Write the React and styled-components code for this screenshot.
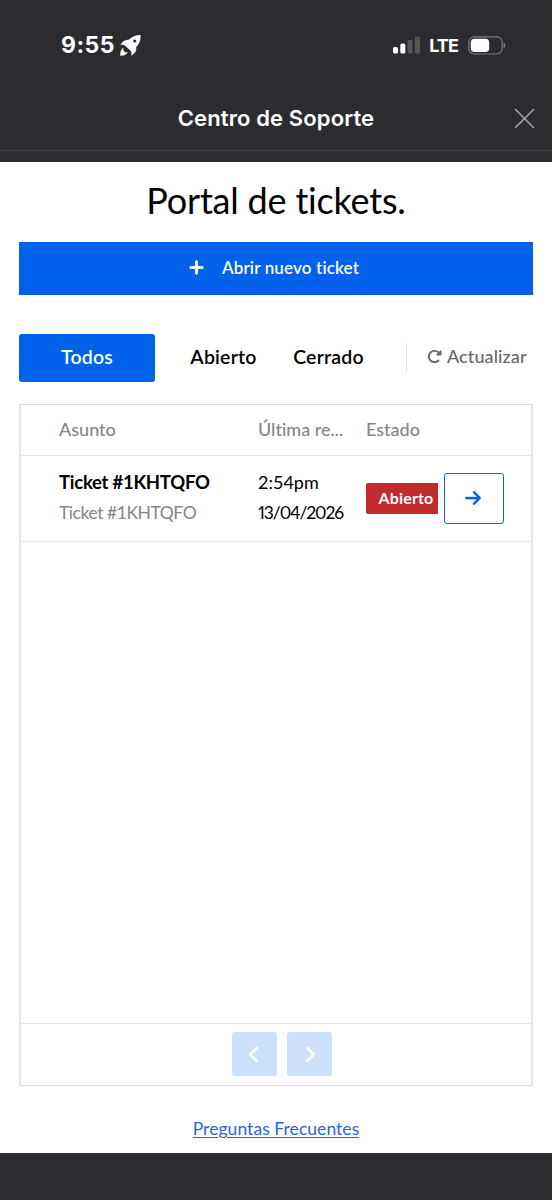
import styled, { createGlobalStyle } from 'styled-components'
import { FaPlus, FaArrowRight, FaChevronLeft, FaChevronRight, FaRotateRight } from 'react-icons/fa6'

const GlobalStyle = createGlobalStyle`
  * {
    box-sizing: border-box;
  }

  body {
    margin: 0;
    background: #2c2b30;
    font-family: Lato, 'Open Sans', sans-serif;
    font-variant-ligatures: none;
    color: #000;
  }

  button {
    font-family: inherit;
    font-variant-ligatures: none;
    cursor: pointer;
  }
`

const Screen = styled.div`
  width: 552px;
  height: 1200px;
  display: flex;
  flex-direction: column;
  overflow: hidden;
`

const StatusBar = styled.div`
  display: flex;
  justify-content: space-between;
  align-items: center;
  height: 90px;
  padding: 0 46px 0 61px;
  color: #fff;
  font-family: Inter, sans-serif;
`

const StatusGroup = styled.div`
  display: flex;
  align-items: center;
`

const Time = styled.span`
  font-size: 23px;
  font-weight: 700;
  letter-spacing: 0.5px;
  margin-right: 5px;
`

const Network = styled.span`
  font-size: 18px;
  font-weight: 700;
  letter-spacing: -0.9px;
  margin: 0 10px 0 8px;
`

const TitleBar = styled.header`
  display: flex;
  justify-content: center;
  align-items: center;
  position: relative;
  height: 61px;
  padding-bottom: 4px;
  border-bottom: 1px solid #424146;
  margin-bottom: 11px;
`

const BarTitle = styled.h1`
  margin: 0;
  color: #fff;
  font-family: Inter, sans-serif;
  font-size: 22px;
  font-weight: 600;
  letter-spacing: 0.12px;
`

const CloseButton = styled.button`
  position: absolute;
  right: 17px;
  top: 18px;
  display: flex;
  padding: 0;
  border: none;
  background: none;
`

const Page = styled.main`
  height: 991px;
  padding: 0 19px;
  background: #fff;
`

const Heading = styled.h2`
  margin: 0;
  height: 80px;
  line-height: 76px;
  text-align: center;
  font-size: 36px;
  font-weight: 400;
  letter-spacing: -0.2px;
`

const NewTicket = styled.button`
  display: flex;
  justify-content: center;
  align-items: center;
  gap: 17px;
  width: 100%;
  height: 53px;
  padding: 0 5px 2px 0;
  border: none;
  background: #0062eb;
  color: #fff;
  font-size: 17px;
  font-weight: 600;
  letter-spacing: 0.15px;
`

const Filters = styled.div`
  display: flex;
  align-items: center;
  height: 48px;
  margin: 39px 0 22px;
`

const Tab = styled.button`
  width: ${(props) => props.$width}px;
  height: 48px;
  padding: 0 0 3px;
  border: none;
  border-radius: 3px;
  background: ${(props) => (props.$active ? '#0062eb' : 'transparent')};
  color: ${(props) => (props.$active ? '#fff' : '#000')};
  font-size: 19.5px;
  font-weight: 600;
  letter-spacing: 0.2px;
`

const Refresh = styled.button`
  display: flex;
  align-items: center;
  gap: 5px;
  height: 30px;
  margin-left: 41px;
  padding: 0 0 4px 20px;
  border: none;
  border-left: 1px solid #e4e4e4;
  background: none;
  color: #686868;
  font-size: 18px;
  font-weight: 500;
  letter-spacing: 0.1px;
  white-space: nowrap;
`

const Table = styled.section`
  display: flex;
  flex-direction: column;
  height: 682px;
  border: 1px solid #dedede;
  border-left: 2px solid #e6e6e6;
  border-right: 2px solid #e6e6e6;
`

const Columns = styled.div`
  display: grid;
  grid-template-columns: 199px 108px 78px 60px;
  align-items: center;
  padding-left: 38px;
  border-bottom: 1px solid #e8e8e8;
`

const HeadRow = styled(Columns)`
  height: 51px;
  padding-bottom: 2px;
  color: #858585;
  font-size: 18px;
  font-weight: 500;
`

const TicketRow = styled(Columns)`
  height: 86px;
`

const Cell = styled.div`
  margin-top: -2px;
  line-height: 30.5px;
  white-space: nowrap;
  font-size: 18px;
`

const Subject = styled.div`
  font-weight: 700;
  font-size: 18.5px;
  letter-spacing: -0.25px;
`

const Detail = styled.div`
  color: #858585;
  font-size: 17.5px;
  letter-spacing: -0.45px;
`

const DateText = styled.div`
  font-variant-numeric: proportional-nums;
  font-size: 17.5px;
  letter-spacing: -1.1px;
`

const Badge = styled.span`
  display: block;
  width: 72px;
  height: 31px;
  padding-left: 12.5px;
  border-radius: 2px 0 0 2px;
  background: #c22b2d;
  color: #fff;
  font-size: 16px;
  font-weight: 700;
  line-height: 29px;
  letter-spacing: 0.15px;
`

const OpenButton = styled.button`
  display: flex;
  justify-content: center;
  align-items: center;
  width: 60px;
  height: 51px;
  padding: 0 2px 1px 0;
  border: 1.5px solid #1265df;
  border-radius: 3px;
  background: #fff;
  color: #0062eb;
`

const Pager = styled.div`
  display: flex;
  justify-content: center;
  gap: 10px;
  height: 62px;
  margin-top: auto;
  padding: 8px 0 0 12px;
  border-top: 1px solid #e8e8e8;
`

const PageButton = styled.button`
  display: flex;
  justify-content: center;
  align-items: center;
  width: 45px;
  height: 44px;
  padding: 0;
  border: none;
  border-radius: 3px;
  background: #ccdffb;
  color: #fff;
`

const Faq = styled.a`
  display: block;
  width: max-content;
  margin: 32px auto 0;
  color: #1f69d8;
  font-size: 17.5px;
  line-height: 22px;
  letter-spacing: 0.05px;
  text-decoration: underline;
  text-underline-offset: 2px;
`

const tickets = [{ id: '1KHTQFO', time: '2:54pm', date: '13/04/2026', status: 'Abierto' }]

function RocketIcon() {
  return (
    <svg width="21" height="21" viewBox="0 0 61 61" fill="#fff">
      <path
        fillRule="evenodd"
        d="M60 0C46 0 34 5 25 14 14 13 6 20 1 30c5-2 10-2 14 1l16 15c3 4 3 8 1 14 11-5 17-14 15-25C56 27 60 15 60 0zM43 13a4.500 4.500 0 1 1 0 9 4.500 4.500 0 0 1 0-9z"
      />
      <path d="M10 37C3 41 0 49 1 60c10 1 18-3 22-10-4 2-7 1-10-1-3-3-4-7-3-12z" />
    </svg>
  )
}

function SignalIcon() {
  return (
    <svg width="28" height="18" viewBox="0 0 28 18">
      <rect x="0" y="11" width="5" height="6.5" rx="1.6" fill="#fff" />
      <rect x="7.3" y="7.5" width="5" height="10" rx="1.6" fill="#fff" />
      <rect x="14.6" y="4" width="5" height="13.5" rx="1.6" fill="#56555a" />
      <rect x="22" y="0.5" width="5" height="17" rx="1.6" fill="#56555a" />
    </svg>
  )
}

function BatteryIcon() {
  return (
    <svg width="38" height="19" viewBox="0 0 38 19">
      <rect x="0.8" y="0.8" width="33.4" height="17.2" rx="5.6" fill="none" stroke="#7d7c81" strokeWidth="1.2" />
      <rect x="2.8" y="2.8" width="18.4" height="13.2" rx="3.8" fill="#fff" />
      <path d="M35.6 6.6c2.4.9 2.4 4.7 0 5.6z" fill="#7d7c81" />
    </svg>
  )
}

export default function App() {
  return (
    <Screen>
      <GlobalStyle />
      <StatusBar>
        <StatusGroup>
          <Time>9:55</Time>
          <RocketIcon />
        </StatusGroup>
        <StatusGroup>
          <SignalIcon />
          <Network>LTE</Network>
          <BatteryIcon />
        </StatusGroup>
      </StatusBar>
      <TitleBar>
        <BarTitle>Centro de Soporte</BarTitle>
        <CloseButton aria-label="Cerrar">
          <svg width="21" height="21" viewBox="0 0 21 21">
            <path d="M1.5 1.5l18 18M19.5 1.5l-18 18" stroke="#a3a2a5" strokeWidth="1.6" strokeLinecap="round" />
          </svg>
        </CloseButton>
      </TitleBar>
      <Page>
        <Heading>Portal de tickets.</Heading>
        <NewTicket>
          <FaPlus size={17} strokeWidth={26} />
          <span>Abrir nuevo ticket</span>
        </NewTicket>
        <Filters>
          <Tab $active $width={136}>Todos</Tab>
          <Tab $width={137}>Abierto</Tab>
          <Tab $width={73}>Cerrado</Tab>
          <Refresh>
            <FaRotateRight size={15} />
            <span>Actualizar</span>
          </Refresh>
        </Filters>
        <Table>
          <HeadRow>
            <span>Asunto</span>
            <span>Última re...</span>
            <span>Estado</span>
          </HeadRow>
          {tickets.map((ticket) => (
            <TicketRow key={ticket.id}>
              <Cell>
                <Subject>Ticket #{ticket.id}</Subject>
                <Detail>Ticket #{ticket.id}</Detail>
              </Cell>
              <Cell>
                <div>{ticket.time}</div>
                <DateText>{ticket.date}</DateText>
              </Cell>
              <Badge>{ticket.status}</Badge>
              <OpenButton aria-label="Ver ticket">
                <FaArrowRight size={18} strokeWidth={8} />
              </OpenButton>
            </TicketRow>
          ))}
          <Pager>
            <PageButton aria-label="Anterior">
              <FaChevronLeft size={17} strokeWidth={22} />
            </PageButton>
            <PageButton aria-label="Siguiente">
              <FaChevronRight size={17} strokeWidth={22} />
            </PageButton>
          </Pager>
        </Table>
        <Faq href="#faq">Preguntas Frecuentes</Faq>
      </Page>
    </Screen>
  )
}
